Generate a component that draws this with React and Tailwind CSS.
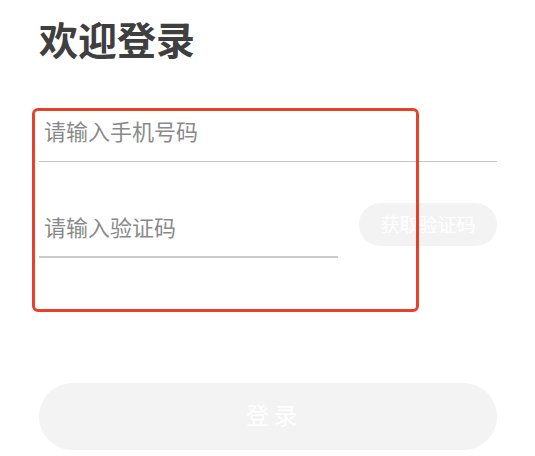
export default function App() {
  return (
    <div
      className="relative w-[535px] h-[456px] bg-white overflow-hidden px-[39px] pr-[38px]"
      style={{ fontFamily: '"Noto Sans CJK SC", "Noto Sans", sans-serif' }}
    >
      <h1 className="pt-[18px] text-[39px] leading-[40px] font-bold text-[#3f3f3f]">欢迎登录</h1>

      <div className="mt-[52px] h-[52px] pb-[11px] pl-[5px] flex items-center border-b border-[#c4c4c4] text-[22px] text-[#8a8a8a]">
        请输入手机号码
      </div>

      <div className="mt-[41px] flex items-end justify-between">
        <div className="w-[299px] h-[48px] pb-[13px] pl-[5px] flex items-center border-b-2 border-[#cccccc] text-[22px] text-[#8a8a8a]">
          请输入验证码
        </div>
        <button className="w-[138px] h-[43px] mb-[12px] rounded-full bg-[#f3f3f3] text-white text-[19px] flex items-center justify-center">
          获取验证码
        </button>
      </div>

      <button className="mt-[125px] w-full h-[67px] rounded-full bg-[#f3f3f3] text-white text-[23px] flex items-center justify-center pl-[7px] pb-[4px]">
        登 录
      </button>

      <div className="pointer-events-none absolute left-[32px] top-[108px] w-[387px] h-[204px] border-[3px] border-[#e8412a] rounded-[6px]" />
    </div>
  )
}
